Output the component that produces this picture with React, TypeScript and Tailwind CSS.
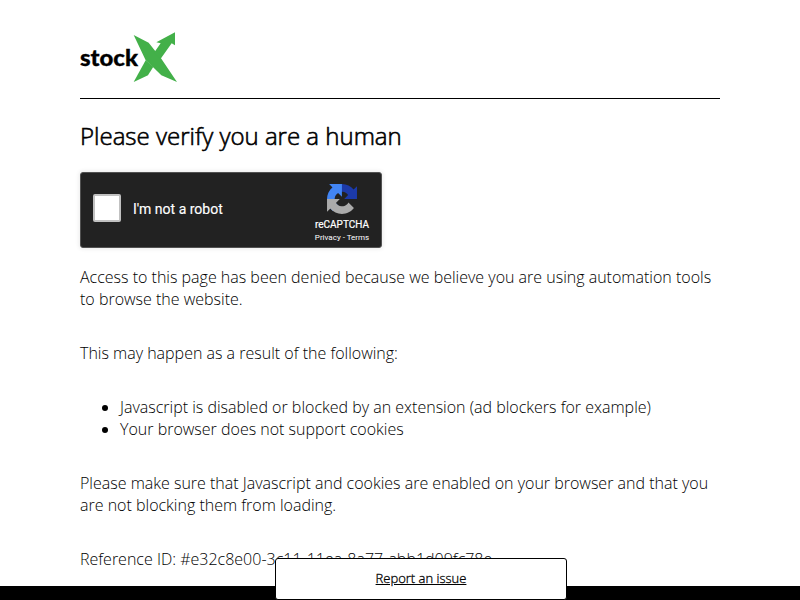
function StockXLogo() {
  return (
    <svg className="block h-[50px] w-[98px]" viewBox="0 0 294 150" role="img" aria-label="stockX">
      <text x="0" y="101" textLength="174" lengthAdjust="spacingAndGlyphs" className="fill-black stroke-black stroke-1 font-['Lato',sans-serif] text-[70px] font-black">stock</text>
      <g fill="#43b049">
        <path d="M161 9L206 32L228 60L244 80L291 150L244 130L218 104L197 85Z" />
        <path d="M197 85L220 104L204 130L161 150Z" />
        <path d="M285 1L285 40L275 34L242 80L222 62L242 34L229 31Z" />
      </g>
    </svg>
  );
}

function RecaptchaIcon() {
  return (
    <svg className="block h-8 w-8 p-px" viewBox="0 0 64 64" aria-hidden="true">
      <path fill="#1c3aa9" d="M64 31.955a33 33 0 0 0-.033-1.37V4.687l-7.16 7.16C50.948 4.674 42.033.093 32.05.093c-10.4 0-19.622 4.96-25.458 12.64l11.736 11.86a15.55 15.55 0 0 1 4.754-5.334c2.05-1.6 4.952-2.906 8.968-2.906.485 0 .86.057 1.135.163 4.976.393 9.288 3.14 11.828 7.124l-8.307 8.307L64 31.953" />
      <path fill="#4285f4" d="M31.862.094c-.46.007-.915.017-1.37.034H4.594l7.16 7.16C4.58 13.147 0 22.06 0 32.046c0 10.4 4.96 19.622 12.64 25.458L24.5 45.768a15.55 15.55 0 0 1-5.334-4.754c-1.6-2.05-2.906-4.952-2.906-8.968 0-.485.057-.86.163-1.135.393-4.976 3.14-9.288 7.124-11.828l8.307 8.307L31.86.095" />
      <path fill="#ababab" d="M.001 32.045c.007.46.018.915.034 1.37v25.898l7.16-7.16c5.86 7.173 14.774 11.754 24.76 11.754 10.4 0 19.622-4.96 25.458-12.64l-11.736-11.86a15.55 15.55 0 0 1-4.754 5.334c-2.05 1.6-4.952 2.906-8.968 2.906-.485 0-.86-.057-1.135-.163-4.976-.393-9.288-3.14-11.828-7.124l8.307-8.307L0 32.046" />
    </svg>
  );
}

function Captcha() {
  return (
    <div className="flex h-19 w-[302px] items-center justify-between rounded-[3px] border border-[#525252] bg-[#222] pr-3 pl-3 font-['Roboto',sans-serif] font-normal shadow-[0_0_4px_1px_rgba(0,0,0,0.08)]">
      <label className="flex items-center gap-3 pb-1 text-sm leading-[17px] text-white">
        <span className="size-7 rounded-xs border-2 border-[#c1c1c1] bg-white" />
        <span className="pt-[3px] [-webkit-text-stroke:0.15px_white]">I'm not a robot</span>
      </label>
      <div className="flex h-full w-[54px] flex-col items-center pt-[10px] whitespace-nowrap text-white">
        <RecaptchaIcon />
        <div className="mt-[5px] text-[10px] leading-[10px] [-webkit-text-stroke:0.2px_white]">reCAPTCHA</div>
        <div className="mt-[3px] text-[8px] leading-[10px]">Privacy - Terms</div>
      </div>
    </div>
  );
}

export default function App() {
  return (
    <div className="relative flex h-[600px] flex-col overflow-hidden bg-white font-['Open_Sans',sans-serif] text-base leading-[22px] font-light text-black">
      <div className="mx-20 border-b border-black pt-8 pb-4">
        <StockXLogo />
      </div>
      <main className="mx-20 flex-1">
        <h1 className="mt-5 mb-[19px] text-2xl leading-[34px] [-webkit-text-stroke:0.6px_black]">Please verify you are a human</h1>
        <Captcha />
        <p className="mt-[18px]">Access to this page has been denied because we believe you are using automation tools to browse the website.</p>
        <p className="mt-8">This may happen as a result of the following:</p>
        <ul className="my-8 list-disc pl-10">
          <li>Javascript is disabled or blocked by an extension (ad blockers for example)</li>
          <li>Your browser does not support cookies</li>
        </ul>
        <p>Please make sure that Javascript and cookies are enabled on your browser and that you are not blocking them from loading.</p>
        <p className="mt-8">Reference ID: #e32c8e00-3c11-11ea-8a77-abb1d09fc78e</p>
      </main>
      <footer className="h-[14px] shrink-0 bg-black" />
      <div className="absolute bottom-0 left-[275px] flex h-[42px] w-[292px] items-center justify-center rounded-[3px] border border-black bg-white pb-[2px] text-[13px]">
        <a href="#" className="underline [-webkit-text-stroke:0.3px_black]">Report an issue</a>
      </div>
    </div>
  );
}
